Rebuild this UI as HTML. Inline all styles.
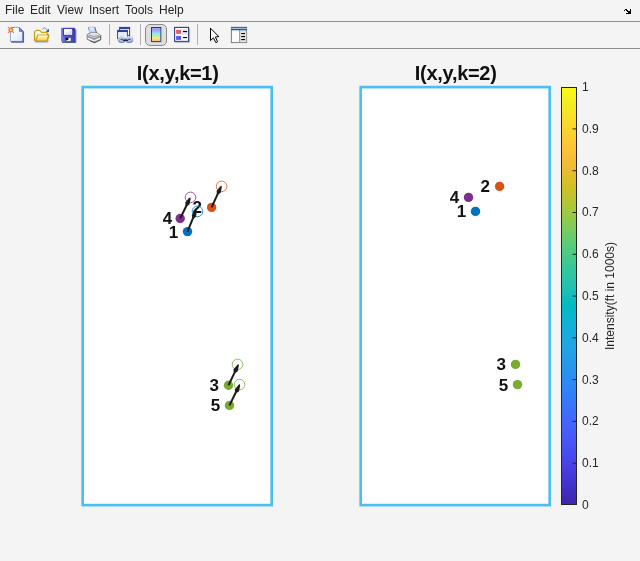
<!DOCTYPE html>
<html><head><meta charset="utf-8"><title>Figure</title>
<style>
html,body{margin:0;padding:0;}
body{width:640px;height:561px;overflow:hidden;background:#f4f4f4;position:relative;font-family:"Liberation Sans",sans-serif;}
#menu{position:absolute;left:0;top:0;width:640px;height:21px;background:#f4f4f4;}
#menu span{position:absolute;top:3px;font-size:12px;line-height:14px;color:#242424;white-space:nowrap;}
.hl{position:absolute;left:0;width:640px;height:1px;background:#8e8e8e;}
#tb{position:absolute;left:0;top:22px;width:640px;height:26px;background:#f4f4f4;}
.sep{position:absolute;top:24px;width:1px;height:21px;background:#b0b0b0;}
.ic{position:absolute;}
#plot{position:absolute;left:0;top:0;will-change:transform;}
#menu{will-change:transform;}
.lb{font:bold 17px "Liberation Sans",sans-serif;fill:#111;text-anchor:end;}
.tk{font:12px "Liberation Sans",sans-serif;fill:#262626;}
.ti{font:bold 20px "Liberation Sans",sans-serif;letter-spacing:-0.3px;fill:#111;text-anchor:middle;}
.cl{font:12px "Liberation Sans",sans-serif;fill:#262626;text-anchor:middle;}
</style></head><body>
<div id="menu">
<span style="left:5px">File</span><span style="left:30px">Edit</span><span style="left:57px">View</span><span style="left:89px">Insert</span><span style="left:125px">Tools</span><span style="left:159px">Help</span>
</div>
<div class="hl" style="top:21px"></div>
<div id="tb"></div>
<div class="hl" style="top:48px"></div>
<div class="sep" style="left:109px"></div>
<div class="sep" style="left:140px"></div>
<div class="sep" style="left:197px"></div>
<svg id="tbi" width="640" height="50" viewBox="0 0 640 50" style="position:absolute;left:0;top:0;will-change:transform">
<defs>
<linearGradient id="gpage" x1="0" y1="0" x2="1" y2="1"><stop offset="0" stop-color="#ffffff"/><stop offset="0.4" stop-color="#f4f8ff"/><stop offset="1" stop-color="#d8e6fc"/></linearGradient>
<linearGradient id="gfold" x1="0" y1="0" x2="0" y2="1"><stop offset="0" stop-color="#fff6c0"/><stop offset="0.5" stop-color="#fbe484"/><stop offset="1" stop-color="#f4cc48"/></linearGradient>
<linearGradient id="gdisk" x1="0" y1="0" x2="1" y2="0"><stop offset="0" stop-color="#8484ec"/><stop offset="0.15" stop-color="#6c6cde"/><stop offset="0.6" stop-color="#5252c4"/><stop offset="1" stop-color="#3a3a9c"/></linearGradient>
<linearGradient id="gcb" x1="0" y1="0" x2="0" y2="1"><stop offset="0" stop-color="#a79cf8"/><stop offset="0.2" stop-color="#9aa4f2"/><stop offset="0.42" stop-color="#8eeaf0"/><stop offset="0.58" stop-color="#b8eab8"/><stop offset="0.75" stop-color="#f6ee84"/><stop offset="1" stop-color="#fbb094"/></linearGradient>
<linearGradient id="gpap" x1="0" y1="0" x2="0" y2="1"><stop offset="0" stop-color="#eef5ff"/><stop offset="1" stop-color="#a8c6f8"/></linearGradient>
<linearGradient id="gprn" x1="0" y1="0" x2="0" y2="1"><stop offset="0" stop-color="#e6e6e6"/><stop offset="0.5" stop-color="#c4c4c4"/><stop offset="1" stop-color="#909090"/></linearGradient>
</defs>
<!-- new file -->
<g>
<path d="M10.4 27.4 H19.2 L22.6 30.8 V41.4 H10.4 Z" fill="url(#gpage)" stroke="#7a9ce0" stroke-width="0.9"/>
<path d="M11.2 42 H23.3 V31.4" fill="none" stroke="#5a6096" stroke-width="1.5"/>
<path d="M19.1 27 L24 31.8 H19.1 Z" fill="#5a62ac"/>
<circle cx="20.5" cy="30.2" r="0.7" fill="#7f9be0"/>
<circle cx="10.9" cy="29.9" r="2.5" fill="#e87844"/>
<circle cx="10.9" cy="29.9" r="1.2" fill="#dcd864"/>
<circle cx="8.4" cy="27.4" r="0.7" fill="#e87844"/><circle cx="13.4" cy="27.4" r="0.7" fill="#e87844"/>
<circle cx="8.4" cy="32.4" r="0.7" fill="#e87844"/><circle cx="13.4" cy="32.4" r="0.7" fill="#e87844"/>
</g>
<!-- open folder -->
<g>
<path d="M35.6 42.6 H47.8 L48.6 40" fill="none" stroke="#9aa6c0" stroke-width="0.9" opacity="0.6"/>
<path d="M34.4 40.8 V31.6 L35.8 30.3 H40 L41.4 32.3 H47 L47.6 33 V34.8 H49 L47.3 41.4 H35.2 Z" fill="#f0c848" stroke="#c09418" stroke-width="1" stroke-linejoin="round"/>
<path d="M35.6 31.3 H39.8 L41 33.2 H46.6 V34.5 H37.2 L35.4 38.4 Z" fill="#fffdf0"/>
<path d="M37.7 35.2 H48.5 L47 41 H35.7 Z" fill="url(#gfold)" stroke="#c09418" stroke-width="0.9" stroke-linejoin="round"/>
<path d="M38.2 35.9 H47.6" stroke="#fffdf0" stroke-width="0.8" fill="none"/>
<path d="M42.3 29.5 C43.4 27.5 46 27.6 47.2 30" fill="none" stroke="#5c78b4" stroke-width="0.8"/>
<path d="M49 28.8 L48.9 32.2 L45.6 31.4 Z" fill="#3a5698"/>
</g>
<!-- save -->
<g>
<path d="M62.2 42.5 H75.8 V29.6" fill="none" stroke="#3a4670" stroke-width="1" opacity="0.85"/>
<path d="M61 27.8 H74.4 L75.3 28.8 V42 H62 L61 41 Z" fill="url(#gdisk)"/>
<rect x="63" y="28.2" width="10" height="7.6" fill="#3c3cb0"/>
<rect x="64" y="29" width="8.1" height="5.8" fill="#f8f9ff"/>
<path d="M64 34.8 L72.1 29.6 V34.8 Z" fill="#d4dcf6" opacity="0.8"/>
<rect x="65" y="37.3" width="6.2" height="4" fill="#34348c"/>
<rect x="65.6" y="37.8" width="5.2" height="3.3" fill="#eceef6"/>
<path d="M65.6 37.8 H68.4 V39.4 L66.8 40.4 H65.6 Z" fill="#08080c"/>
<rect x="73.2" y="28.8" width="0.9" height="1.6" fill="#28286c"/>
<rect x="63.6" y="40.2" width="1.2" height="1.2" fill="#4c6cd8"/>
</g>
<!-- print -->
<g>
<path d="M88.5 27.2 H94.6 L96 33.6 H89.8 Z" fill="url(#gpap)" stroke="#8a9cd0" stroke-width="0.5"/>
<path d="M94.7 27.1 L96.8 33.6" stroke="#4e5a86" stroke-width="0.9" fill="none"/>
<path d="M88.4 27.2 L89 30" stroke="#6c7cc0" stroke-width="0.7" fill="none"/>
<path d="M87.2 34.4 L90.2 32.9 H97 L100.6 35.4 V39.6 L94.4 42.5 L87.2 39.4 Z" fill="url(#gprn)" stroke="#6e6e6e" stroke-width="0.8" stroke-linejoin="round"/>
<path d="M100.7 35.6 V39.8 L94.6 42.8 L90 40.9" fill="none" stroke="#3c3c3c" stroke-width="0.9" opacity="0.8"/>
<path d="M87.6 36.5 L94.2 39.1 L100.4 36.5" fill="none" stroke="#7c7c7c" stroke-width="0.9"/>
<path d="M88 38.3 L94.2 40.9 L100.2 38.3" fill="none" stroke="#ffffff" stroke-width="1.2"/>
<path d="M88.6 34.9 L94.4 36.7 L99.2 35" fill="none" stroke="#a4a4a4" stroke-width="0.9"/>
<path d="M90.4 33.8 L96.8 33.8 L98.6 34.6" fill="none" stroke="#ffffff" stroke-width="0.8"/>
<rect x="98" y="36.2" width="1" height="1.4" fill="#62b452"/>
<rect x="93.6" y="40.6" width="1.4" height="1" fill="#7a86d8"/>
</g>
<!-- link -->
<g>
<rect x="119.6" y="28" width="10" height="7.6" fill="#ffffff" stroke="#2f4398" stroke-width="1"/>
<rect x="119.1" y="26.9" width="11" height="2.2" fill="#2f4398"/>
<rect x="117.6" y="31" width="9.8" height="7.6" fill="#fbfcff" stroke="#2f4398" stroke-width="1"/>
<rect x="117.1" y="29.9" width="10.8" height="2.2" fill="#2f4398"/>
<rect x="119" y="33" width="7" height="3.4" fill="#e4e9f6"/>
<ellipse cx="121.8" cy="39.4" rx="3.1" ry="2.3" fill="#e8edf8" stroke="#a6b6d8" stroke-width="1.8"/>
<ellipse cx="129.3" cy="39.4" rx="3.1" ry="2.3" fill="#e8edf8" stroke="#a6b6d8" stroke-width="1.8"/>
<path d="M118.6 37.9 C119.6 36.5 123.6 36.4 124.8 37.8 M126.2 37.8 C127.4 36.4 131.4 36.5 132.4 37.9" fill="none" stroke="#e6ecf8" stroke-width="0.9"/>
<path d="M118.2 40.8 C119.4 43 124 43 125.2 41.2 M125.8 41.2 C127 43 131.6 43 132.9 40.8" fill="none" stroke="#4f68a4" stroke-width="0.9"/>
<ellipse cx="121.8" cy="39.4" rx="1.7" ry="0.9" fill="#50648f"/>
<ellipse cx="129.3" cy="39.4" rx="1.7" ry="0.9" fill="#50648f"/>
<rect x="122.9" y="39.4" width="5.3" height="1.5" rx="0.7" fill="#14245a"/>
</g>
<!-- colorbar toggle (pressed) -->
<g>
<rect x="145.5" y="24.5" width="21" height="21" rx="4.5" ry="4.5" fill="#dedede" stroke="#8a8a8a" stroke-width="1"/>
<rect x="151.5" y="27.5" width="9.4" height="14" fill="url(#gcb)" stroke="#243a80" stroke-width="1"/>
<path d="M152 42.3 H161.6 V28.4" fill="none" stroke="#b8bcc4" stroke-width="0.7"/>
</g>
<!-- legend -->
<g>
<rect x="174.6" y="27.4" width="14" height="14" fill="#fafcff" stroke="#2c3f80" stroke-width="1.1"/>
<path d="M175.4 42.3 H189.6 V28.4" fill="none" stroke="#9aa2b4" stroke-width="0.8"/>
<rect x="181.6" y="29" width="6" height="6" fill="#e2e9f6"/>
<rect x="176.1" y="29.9" width="4.9" height="3.9" fill="#e85a5a"/>
<rect x="176.1" y="36" width="4.9" height="3.9" fill="#5a5ae8"/>
<rect x="183" y="31" width="4.1" height="1.1" fill="#000"/>
<rect x="183" y="37" width="4.1" height="1.1" fill="#000"/>
</g>
<!-- pointer -->
<g>
<path d="M210.5 28.2 V40.6 L213.4 37.8 L215.8 42.6 L217.6 41.8 L215.4 37 L218.8 36.6 Z" fill="#ffffff" stroke="#000" stroke-width="1" stroke-linejoin="miter"/>
</g>
<!-- property inspector -->
<g>
<rect x="231.4" y="27.4" width="15.2" height="15.2" fill="#fbfbfb" stroke="#7c7c7c" stroke-width="1"/>
<rect x="240" y="30" width="6.2" height="12.2" fill="#e2e2e2"/>
<rect x="239.2" y="30" width="0.9" height="12.4" fill="#8a8a8a"/>
<rect x="231" y="26.9" width="16" height="3.2" fill="#3c6c9e"/>
<rect x="231.4" y="28" width="15.2" height="0.9" fill="#a6c6e6"/>
<rect x="231" y="29.4" width="16" height="0.8" fill="#2a5078"/>
<rect x="241.2" y="33" width="3.8" height="1.1" fill="#000"/>
<rect x="241.2" y="36" width="3.8" height="1.1" fill="#000"/>
<rect x="241.2" y="39" width="3.8" height="1.1" fill="#000"/>
</g>
<!-- dock arrow -->
<g fill="#000" shape-rendering="crispEdges">
<rect x="625" y="9" width="2" height="1"/><rect x="624" y="10" width="1" height="1"/><rect x="626" y="10" width="2" height="1"/>
<rect x="627" y="11" width="4" height="1"/><rect x="628" y="12" width="3" height="1"/><rect x="626" y="13" width="5" height="1"/>
<rect x="630" y="9" width="1" height="2"/>
</g>
</svg>

<svg id="plot" width="640" height="561" viewBox="0 0 640 561">
<defs><linearGradient id="pg" x1="0" y1="1" x2="0" y2="0"><stop offset="0.0000" stop-color="#3e26a8"/><stop offset="0.0476" stop-color="#4332cb"/><stop offset="0.0952" stop-color="#4741e5"/><stop offset="0.1429" stop-color="#4852f4"/><stop offset="0.1905" stop-color="#4563fd"/><stop offset="0.2381" stop-color="#3875fe"/><stop offset="0.2857" stop-color="#2e87f7"/><stop offset="0.3333" stop-color="#2797eb"/><stop offset="0.3810" stop-color="#20a5e3"/><stop offset="0.4286" stop-color="#12b1d6"/><stop offset="0.4762" stop-color="#02bac3"/><stop offset="0.5238" stop-color="#24c1ae"/><stop offset="0.5714" stop-color="#37c897"/><stop offset="0.6190" stop-color="#57cc7a"/><stop offset="0.6667" stop-color="#81cc59"/><stop offset="0.7143" stop-color="#abc739"/><stop offset="0.7619" stop-color="#d1bf27"/><stop offset="0.8095" stop-color="#f0ba36"/><stop offset="0.8571" stop-color="#fec338"/><stop offset="0.9048" stop-color="#fad62d"/><stop offset="0.9524" stop-color="#f5e924"/><stop offset="1.0000" stop-color="#f9fb15"/></linearGradient></defs>
<rect x="82.7" y="87.1" width="189" height="418" fill="#fff" stroke="#4dbeee" stroke-width="2.67"/>
<rect x="360.7" y="87.1" width="189" height="418" fill="#fff" stroke="#4dbeee" stroke-width="2.67"/>
<text x="177.7" y="80" class="ti">I(x,y,k=1)</text>
<text x="455.7" y="80" class="ti">I(x,y,k=2)</text>
<text x="178.2" y="237.7" class="lb">1</text>
<text x="201.9" y="212.5" class="lb">2</text>
<text x="172.3" y="223.7" class="lb">4</text>
<text x="219.0" y="391.0" class="lb">3</text>
<text x="220.1" y="410.8" class="lb">5</text>
<circle cx="187.5" cy="231.6" r="4.7" fill="#0072bd"/>
<circle cx="197.5" cy="211.4" r="5.3" fill="none" stroke="#0072bd" stroke-width="0.8"/>
<circle cx="211.6" cy="207.4" r="4.7" fill="#d95319"/>
<circle cx="221.6" cy="186.4" r="5.3" fill="none" stroke="#d95319" stroke-width="0.8"/>
<circle cx="180.2" cy="218.5" r="4.7" fill="#7e2f8e"/>
<circle cx="190.5" cy="197.4" r="5.3" fill="none" stroke="#7e2f8e" stroke-width="0.8"/>
<circle cx="228.5" cy="385.2" r="4.7" fill="#77ac30"/>
<circle cx="237.5" cy="364.4" r="5.3" fill="none" stroke="#77ac30" stroke-width="0.8"/>
<circle cx="229.5" cy="405.4" r="4.7" fill="#77ac30"/>
<circle cx="239.5" cy="384.6" r="5.3" fill="none" stroke="#77ac30" stroke-width="0.8"/>
<line x1="187.5" y1="231.6" x2="193.7" y2="216.4" stroke="#1c1c1c" stroke-width="2"/><polygon points="196.5,209.5 196.8,211.2 196.4,214.3 195.9,216.8 194.0,218.4 192.1,217.6 191.8,215.1 193.2,213.0 195.1,210.5" fill="#1c1c1c"/>
<line x1="211.6" y1="207.4" x2="218.4" y2="192.3" stroke="#1c1c1c" stroke-width="2"/><polygon points="221.5,185.5 221.7,187.2 221.2,190.3 220.7,192.8 218.6,194.3 216.8,193.5 216.6,191.0 218.1,188.9 220.1,186.5" fill="#1c1c1c"/>
<line x1="180.2" y1="218.5" x2="187.2" y2="204.0" stroke="#1c1c1c" stroke-width="2"/><polygon points="190.4,197.2 190.6,198.9 190.0,202.0 189.4,204.5 187.3,205.9 185.5,205.1 185.3,202.5 186.9,200.5 188.9,198.2" fill="#1c1c1c"/>
<line x1="228.5" y1="385.2" x2="235.4" y2="370.9" stroke="#1c1c1c" stroke-width="2"/><polygon points="238.6,364.1 238.8,365.8 238.2,368.9 237.6,371.4 235.5,372.8 233.7,372.0 233.5,369.4 235.1,367.4 237.1,365.1" fill="#1c1c1c"/>
<line x1="229.5" y1="405.4" x2="236.6" y2="390.8" stroke="#1c1c1c" stroke-width="2"/><polygon points="239.9,384.1 240.1,385.8 239.5,388.9 238.9,391.4 236.8,392.8 235.0,391.9 234.8,389.4 236.4,387.4 238.4,385.1" fill="#1c1c1c"/>
<circle cx="475.5" cy="211.4" r="4.7" fill="#0072bd"/>
<text x="466.2" y="216.6" class="lb">1</text>
<circle cx="499.6" cy="186.4" r="4.7" fill="#d95319"/>
<text x="490.0" y="191.5" class="lb">2</text>
<circle cx="468.5" cy="197.4" r="4.7" fill="#7e2f8e"/>
<text x="459.2" y="203.3" class="lb">4</text>
<circle cx="515.5" cy="364.4" r="4.7" fill="#77ac30"/>
<text x="506.0" y="369.6" class="lb">3</text>
<circle cx="517.5" cy="384.6" r="4.7" fill="#77ac30"/>
<text x="508.1" y="391.0" class="lb">5</text>
<rect x="561.5" y="87.5" width="15" height="417" fill="url(#pg)" stroke="#262626" stroke-width="1"/>
<text x="582" y="509.3" class="tk">0</text>
<line x1="572.5" x2="577" y1="463.2" y2="463.2" stroke="#262626" stroke-width="1"/>
<text x="582" y="466.5" class="tk">0.1</text>
<line x1="572.5" x2="577" y1="421.4" y2="421.4" stroke="#262626" stroke-width="1"/>
<text x="582" y="424.7" class="tk">0.2</text>
<line x1="572.5" x2="577" y1="379.6" y2="379.6" stroke="#262626" stroke-width="1"/>
<text x="582" y="383.9" class="tk">0.3</text>
<line x1="572.5" x2="577" y1="337.8" y2="337.8" stroke="#262626" stroke-width="1"/>
<text x="582" y="342.1" class="tk">0.4</text>
<line x1="572.5" x2="577" y1="296.1" y2="296.1" stroke="#262626" stroke-width="1"/>
<text x="582" y="300.4" class="tk">0.5</text>
<line x1="572.5" x2="577" y1="254.3" y2="254.3" stroke="#262626" stroke-width="1"/>
<text x="582" y="257.8" class="tk">0.6</text>
<line x1="572.5" x2="577" y1="212.5" y2="212.5" stroke="#262626" stroke-width="1"/>
<text x="582" y="216.0" class="tk">0.7</text>
<line x1="572.5" x2="577" y1="170.7" y2="170.7" stroke="#262626" stroke-width="1"/>
<text x="582" y="175.0" class="tk">0.8</text>
<line x1="572.5" x2="577" y1="128.9" y2="128.9" stroke="#262626" stroke-width="1"/>
<text x="582" y="133.2" class="tk">0.9</text>
<text x="582" y="91.4" class="tk">1</text>
<text transform="translate(614,296) rotate(-90)" class="cl">Intensity(ft in 1000s)</text>
</svg>
</body></html>
